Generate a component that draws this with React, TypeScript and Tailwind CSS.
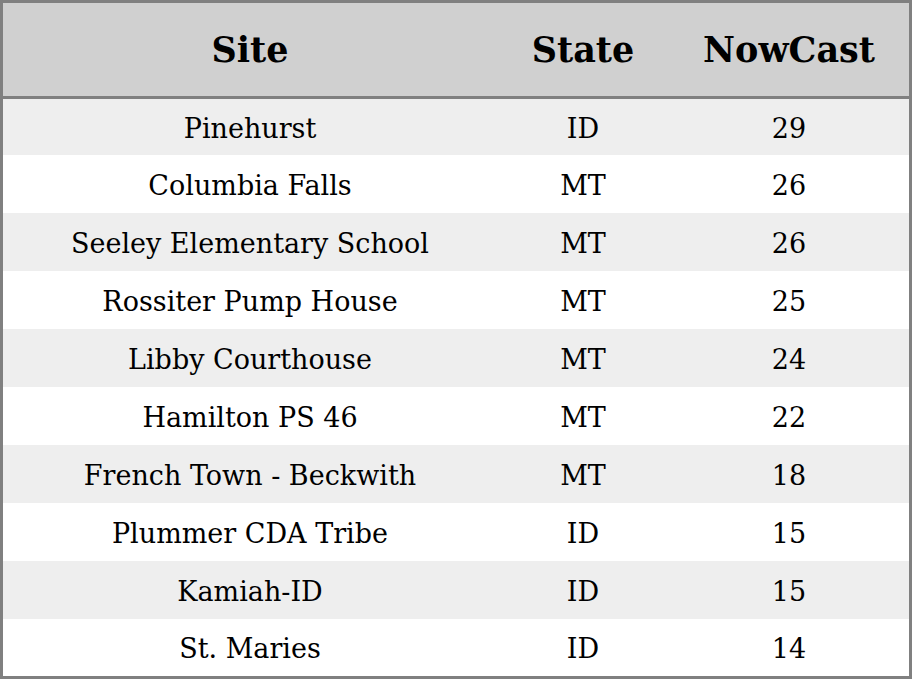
import React from "react";

const rows: [string, string, string][] = [
  ["Pinehurst", "ID", "29"],
  ["Columbia Falls", "MT", "26"],
  ["Seeley Elementary School", "MT", "26"],
  ["Rossiter Pump House", "MT", "25"],
  ["Libby Courthouse", "MT", "24"],
  ["Hamilton PS 46", "MT", "22"],
  ["French Town - Beckwith", "MT", "18"],
  ["Plummer CDA Tribe", "ID", "15"],
  ["Kamiah-ID", "ID", "15"],
  ["St. Maries", "ID", "14"],
];

const heights = ["h-[56px]", "h-[58px]", "h-[58px]", "h-[58px]", "h-[58px]", "h-[58px]", "h-[58px]", "h-[58px]", "h-[58px]", "h-[57px]"];

export default function App() {
  return (
    <div
      className="w-[912px] h-[679px] border-[3px] border-[#808080] bg-white text-black flex flex-col overflow-hidden"
      style={{ fontFamily: '"DejaVu Serif", serif' }}
    >
      <div className="grid grid-cols-[494px_172px_240px] h-[93px] bg-[#d0d0d0] border-b-[3px] border-[#808080] box-content items-center text-[35px] leading-[40px] font-bold">
        <div className="text-center">Site</div>
        <div className="text-center">State</div>
        <div className="text-center">NowCast</div>
      </div>
      {rows.map((r, i) => (
        <div
          key={i}
          className={`grid grid-cols-[494px_172px_240px] items-center text-[27px] leading-[32px] pt-[3px] ${heights[i]} ${i % 2 === 0 ? "bg-[#eeeeee]" : "bg-white"}`}
        >
          <div className="text-center">{r[0]}</div>
          <div className="text-center">{r[1]}</div>
          <div className="text-center">{r[2]}</div>
        </div>
      ))}
    </div>
  );
}
